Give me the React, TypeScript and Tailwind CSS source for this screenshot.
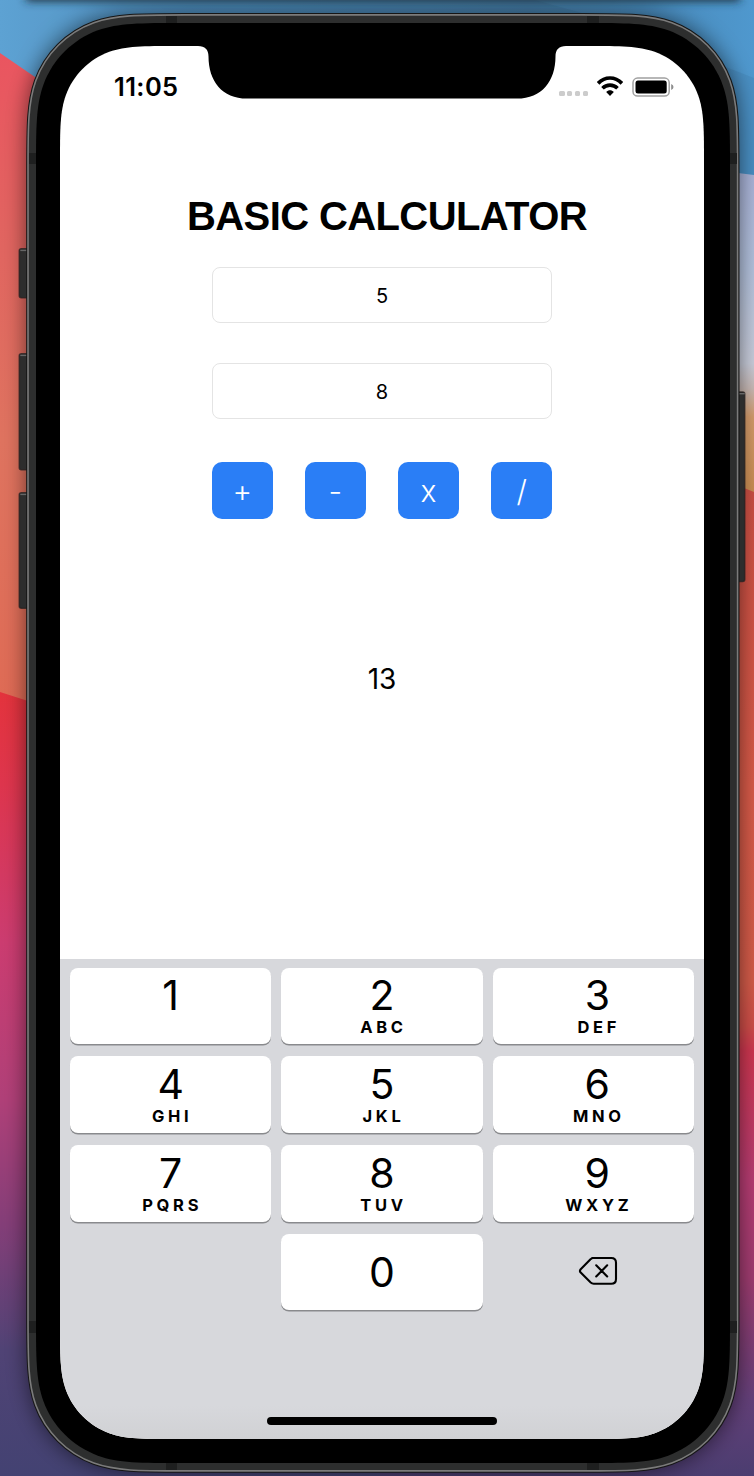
import React from "react";

// Rounded rectangle with continuous-curvature corners.
function squircle(x: number, y: number, w: number, h: number, r: number): string {
  const a = 1.5 * r, b = 1.06 * r, c = 0.84 * r;
  const d = 0.63149379 * r, e = 0.07491139 * r, f = 0.37282383 * r, g = 0.16905956 * r;
  const X = x + w, Y = y + h;
  return [
    `M${x + a} ${y}L${X - a} ${y}`,
    `C${X - b} ${y} ${X - c} ${y} ${X - d} ${y + e}`,
    `C${X - f} ${y + g} ${X - g} ${y + f} ${X - e} ${y + d}`,
    `C${X} ${y + c} ${X} ${y + b} ${X} ${y + a}`,
    `L${X} ${Y - a}`,
    `C${X} ${Y - b} ${X} ${Y - c} ${X - e} ${Y - d}`,
    `C${X - g} ${Y - f} ${X - f} ${Y - g} ${X - d} ${Y - e}`,
    `C${X - c} ${Y} ${X - b} ${Y} ${X - a} ${Y}`,
    `L${x + a} ${Y}`,
    `C${x + b} ${Y} ${x + c} ${Y} ${x + d} ${Y - e}`,
    `C${x + f} ${Y - g} ${x + g} ${Y - f} ${x + e} ${Y - d}`,
    `C${x} ${Y - c} ${x} ${Y - b} ${x} ${Y - a}`,
    `L${x} ${y + a}`,
    `C${x} ${y + b} ${x} ${y + c} ${x + e} ${y + d}`,
    `C${x + g} ${y + f} ${x + f} ${y + g} ${x + d} ${y + e}`,
    `C${x + c} ${y} ${x + b} ${y} ${x + a} ${y}Z`,
  ].join("");
}

function Gradient({ id, y1, y2, stops }: { id: string; y1: number; y2: number; stops: [number, string][] }) {
  return (
    <linearGradient id={id} gradientUnits="userSpaceOnUse" x1="0" y1={y1} x2="0" y2={y2}>
      {stops.map(([o, c]) => (
        <stop key={o} offset={o} stopColor={c} />
      ))}
    </linearGradient>
  );
}

function SideButton({ x, y, w, h }: { x: number; y: number; w: number; h: number }) {
  return (
    <g>
      <rect x={x} y={y} width={w} height={h} rx="2" fill="#2d2d2d" stroke="#262020" strokeOpacity="0.75" strokeWidth="1.5" />
      <rect x={x + 1} y={y + 1} width={w - 1} height="1.4" fill="#676767" />
    </g>
  );
}

function Backdrop() {
  const body = squircle(27.2, 14, 711.3, 1457.7, 105);
  return (
    <svg className="absolute inset-0" width="754" height="1476" viewBox="0 0 754 1476" aria-hidden="true">
      <defs>
        <linearGradient id="sky" x1="0" x2="1" y1="0" y2="0">
          <stop offset="0" stopColor="#65ade0" />
          <stop offset="0.25" stopColor="#5496c8" />
          <stop offset="0.7" stopColor="#4a83af" />
          <stop offset="0.85" stopColor="#488abb" />
          <stop offset="1" stopColor="#4f98ce" />
        </linearGradient>
        <Gradient id="coral" y1={53} y2={700} stops={[[0, "#ea5560"], [0.3, "#e16560"], [0.6, "#df735f"], [1, "#df6b55"]]} />
        <Gradient id="rose" y1={690} y2={1476} stops={[[0, "#e4333c"], [0.12, "#de354d"], [0.32, "#cc3c70"], [0.52, "#b04078"], [0.68, "#843e78"], [0.84, "#504375"], [1, "#434272"]]} />
        <Gradient id="haze" y1={173} y2={490} stops={[[0, "#a9b3d8"], [0.3, "#b3c2dd"], [0.6, "#c9cddb"], [0.68, "#c8b9b5"], [0.77, "#d39a6a"], [1, "#c98d52"]]} />
        <Gradient id="red" y1={488} y2={1476} stops={[[0, "#ca4e43"], [0.3, "#d75a48"], [0.5, "#d35b49"], [0.545, "#ce4d48"], [0.57, "#ce3650"], [0.7, "#b63c72"], [0.8, "#9f3c70"], [0.92, "#633f78"], [1, "#4b3d70"]]} />
        <filter id="soft" x="-10%" y="-10%" width="120%" height="120%">
          <feGaussianBlur stdDeviation="11" />
        </filter>
        <filter id="edge" filterUnits="userSpaceOnUse" x="-40" y="-60" width="840" height="120">
          <feGaussianBlur stdDeviation="5" />
        </filter>
      </defs>
      <rect width="754" height="200" fill="url(#sky)" />
      <path d="M0 0H535L600 18L754 78V180H0Z" fill="#1d4262" fillOpacity="0.1" />
      <path d="M0 53L35 77L380 320V760H0Z" fill="url(#coral)" />
      <path d="M0 692L28 701L380 800V1476H0Z" fill="url(#rose)" />
      <path d="M380 150L738 173L754 175V520H380Z" fill="url(#haze)" />
      <path d="M380 360L744 488L754 492V1476H380Z" fill="url(#red)" />
      <rect x="26" y="-30" width="714" height="31" fill="#1b2d3b" filter="url(#edge)" />
      <path d={body} fill="#000" fillOpacity="0.58" filter="url(#soft)" />
      <SideButton x={19.3} y={248.7} w={10} h={49} />
      <SideButton x={19.3} y={353.7} w={10} h={116} />
      <SideButton x={19.3} y={492.7} w={10} h={115.5} />
      <SideButton x={736} y={392} w={8.7} h={189.5} />
      <path d={body} fill="#2d2e2e" stroke="#161616" strokeWidth="2" />
      <path d={squircle(28, 14.9, 709.6, 1456, 104.2)} fill="#2d2e2e" stroke="#7b7b7b" strokeWidth="1.6" />
      <g fill="#1e1f1f">
        <rect x="166" y="16" width="11" height="7" />
        <rect x="587" y="16" width="12" height="7" />
        <rect x="166" y="1463" width="11" height="7" />
        <rect x="587" y="1463" width="12" height="7" />
        <rect x="29" y="153" width="7" height="11" />
        <rect x="730" y="153" width="7" height="11" />
        <rect x="29" y="1321" width="7" height="12" />
        <rect x="730" y="1321" width="7" height="12" />
      </g>
      <path d={squircle(36, 23, 694, 1440, 98)} fill="#000" />
    </svg>
  );
}

function WifiIcon() {
  return (
    <svg width="28" height="22" viewBox="0 0 28 22" fill="none" stroke="#000" strokeWidth="3.7">
      <path d="M2.1 7.4C9 .2 19 .2 25.9 7.4" />
      <path d="M6.5 12.2C10.7 8.1 17.3 8.1 21.5 12.2" />
      <path d="M10.2 16C12.4 13.6 15.6 13.6 17.8 16L14 20Z" fill="#000" stroke="none" />
    </svg>
  );
}

function BatteryIcon() {
  return (
    <svg width="42" height="21" viewBox="0 0 42 21">
      <rect x="1" y="1.1" width="36.2" height="18" rx="4.6" fill="none" stroke="#a0a0a0" strokeWidth="1.5" />
      <rect x="3.5" y="3.6" width="31.2" height="13" rx="2.5" fill="#000" />
      <path d="M39.2 7.1Q41.5 8 41.5 10.1T39.2 13.1Z" fill="#8e8e8e" />
    </svg>
  );
}

function DeleteIcon() {
  return (
    <svg width="40" height="30" viewBox="0 0 40 30" fill="none" stroke="#000" strokeWidth="2.1" strokeLinecap="round" strokeLinejoin="round">
      <path d="M14.2 2H33.2Q38 2 38 6.8V22.9Q38 27.7 33.2 27.7H15.7Q14 27.7 12.7 26.5L2.7 16.6Q1.2 14.9 2.7 13.2L12.5 3.3Q13.5 2 15.2 2Z" />
      <path d="M18.2 9.3L29.2 20.5M29.2 9.3L18.2 20.5" />
    </svg>
  );
}

const keys: [string, string][] = [
  ["1", ""], ["2", "ABC"], ["3", "DEF"],
  ["4", "GHI"], ["5", "JKL"], ["6", "MNO"],
  ["7", "PQRS"], ["8", "TUV"], ["9", "WXYZ"],
];

const keyClass = "flex flex-col items-center rounded-[8px] bg-white shadow-[0_1.5px_0_#898a8d]";

export default function App() {
  return (
    <div className="relative h-[1476px] w-[754px] overflow-hidden bg-black font-['Inter',sans-serif] text-black">
      <Backdrop />
      <div className="relative pt-[46px] pl-[60px]">
        <main
          className="relative flex h-[1393px] w-[644px] flex-col bg-white"
          style={{ clipPath: `path("${squircle(0, 0, 644, 1393, 78.1)}")` }}
        >
          <svg className="absolute top-0 left-[138px]" width="368" height="53" viewBox="0 0 368 53" aria-hidden="true">
            <path d="M0 0H368C361 0 357.5 3.5 357.5 10.5C357.5 35 344 52.6 319 52.6H49C24 52.6 10.5 35 10.5 10.5C10.5 3.5 7 0 0 0Z" fill="#000" />
          </svg>

          <header className="flex h-[80px] shrink-0 items-start justify-between">
            <span className="mt-[25px] ml-[54px] text-[25.5px] leading-[32px] font-semibold tracking-[0.4px]">11:05</span>
            <div className="mt-[30px] mr-[30px] flex items-start">
              <div className="mt-[15px] mr-[8px] flex gap-[2.4px]">
                {[0, 1, 2, 3].map((i) => (
                  <span key={i} className="size-[5.4px] rounded-[1.5px] bg-[#cccccc]" />
                ))}
              </div>
              <WifiIcon />
              <div className="mt-[0.5px] ml-[8px]">
                <BatteryIcon />
              </div>
            </div>
          </header>

          <section className="flex flex-col items-center">
            <h1 className="mt-[66px] ml-[10px] h-[48px] font-['Liberation_Sans',sans-serif] text-[40px] leading-[48px] font-bold tracking-[-0.6px] whitespace-nowrap">
              BASIC CALCULATOR
            </h1>
            <div className="mt-[27px] flex h-[56px] w-[340px] items-center justify-center rounded-[8px] border border-[#e4e4e4] pt-[2px] text-[20px]">5</div>
            <div className="mt-[40px] flex h-[56px] w-[340px] items-center justify-center rounded-[8px] border border-[#e4e4e4] pt-[2px] text-[20px]">8</div>
            <div className="mt-[43px] flex w-[340px] justify-between">
              {["+", "-", "x", "/"].map((op) => (
                <button key={op} className="flex h-[56.5px] w-[60.5px] items-center justify-center rounded-[10px] bg-[#2a7ef6] pt-[1px] text-[30px] leading-none font-light text-white">
                  {op}
                </button>
              ))}
            </div>
            <output className="mt-[140.5px] text-[28px] leading-[40px]">13</output>
          </section>

          <section className="mt-auto flex h-[480px] flex-col bg-[linear-gradient(#d7d8dc_93%,#d0d1d4)] px-[10px] pt-[9px]">
            <div className="grid grid-cols-3 grid-rows-[76px_77px_77px_76px] gap-x-[10px] gap-y-[12px]">
              {keys.map(([digit, letters], i) => (
                <button key={digit} className={`${keyClass} ${i < 3 ? "pt-[5px]" : "pt-[6px]"} ${i % 3 === 2 ? "pl-[8px]" : ""}`}>
                  <span className="h-[44px] text-[41px] leading-[44px]">{digit}</span>
                  <span className="ml-[3px] text-[16.5px] leading-[20px] font-bold tracking-[3.7px]">{letters}</span>
                </button>
              ))}
              <span />
              <button className={keyClass}>
                <span className="mt-[16px] h-[44px] text-[41px] leading-[44px]">0</span>
              </button>
              <button className="flex items-center justify-center pb-[3px] pl-[10px]">
                <DeleteIcon />
              </button>
            </div>
            <div className="mt-auto mb-[14px] h-[8px] w-[230px] self-center rounded-full bg-black" />
          </section>
        </main>
      </div>
    </div>
  );
}
